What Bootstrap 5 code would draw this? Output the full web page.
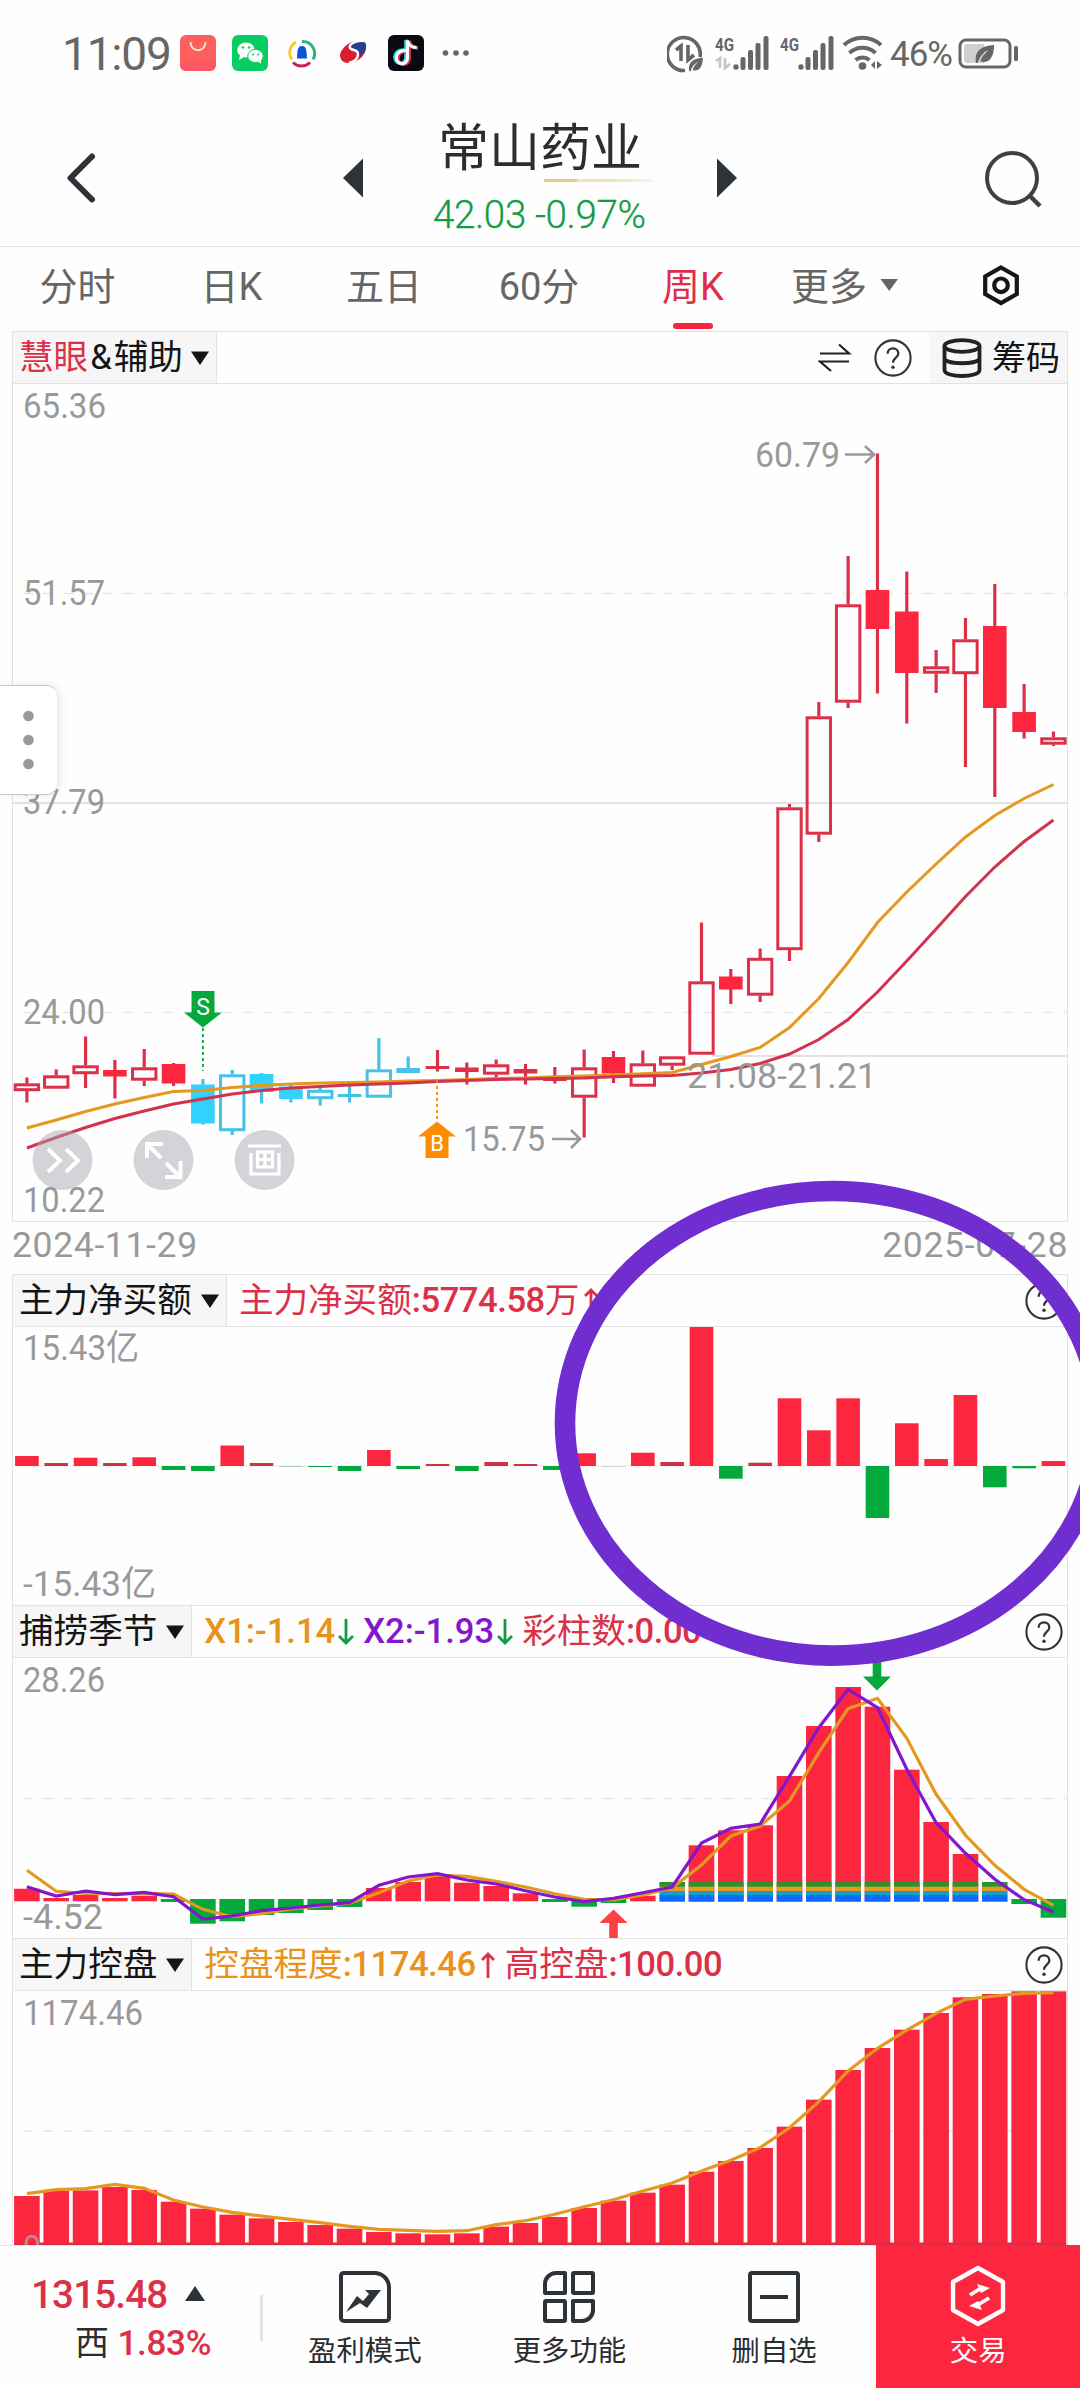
<!DOCTYPE html>
<html lang="zh-CN">
<head>
<meta charset="utf-8">
<meta name="viewport" content="width=device-width, initial-scale=1">
<title>常山药业 周K</title>
<link href="https://cdn.jsdelivr.net/npm/bootstrap@5.3.0/dist/css/bootstrap.min.css" rel="stylesheet">
<style>
:root{--up:#fd263f;--upline:#dc3049;--down:#04a93b;--sky:#31d2fd;--skyline:#45c3e6;--gold:#e5981f;--violet:#8416cc;--rule:#e2e2e2}
body{font-family:Roboto,"Noto Sans CJK SC",sans-serif;background:#fefefe;color:#2b2d30;width:1080px;height:2388px;overflow:hidden;position:relative;line-height:1}
svg{display:block;flex:none}
.statusbar{height:108px;padding:0 0 0 62px;color:#666}
.clock{font-size:46px;letter-spacing:-1.2px;width:118px}
.pct{font-size:35px;letter-spacing:-1px;width:68px;white-space:nowrap}
.titlebar{height:139px;border-bottom:1px solid var(--rule)}
.titlecol{width:216px;padding-top:11px}
.stock{font-size:51px;line-height:60px;width:204px;margin-left:8px;white-space:nowrap}
.quote{font-size:38.5px;line-height:40px;margin:13px 0 0 3px;font-weight:300;color:#109c42;-webkit-text-stroke:.3px #109c42;white-space:nowrap;letter-spacing:-.35px}
.goldline{width:109px;height:3px;margin-left:114px;background:linear-gradient(90deg,#e2cd94 0 30%,#f2e3b4 30% 60%,#f7f4ec)}
.tabs{height:84px;font-size:38px;color:#666}
.tabs .tab{white-space:nowrap;line-height:81px;height:84px;text-align:center;flex:none}
.tabs .on{color:var(--upline);position:relative}
.tabs .on::after{content:"";position:absolute;left:50%;margin-left:-20px;bottom:2px;width:40px;height:6px;border-radius:3px;background:#f5253f}
.panels{padding:0 12px}
.panel{border:1px solid var(--rule);border-bottom:0}
.phead{height:52px;border-bottom:1px solid var(--rule);font-size:34.6px;color:#141414}
.chip{background:#f6f6f6;height:51px;padding:0 7px 0 6px;border-right:1px solid var(--rule);white-space:nowrap}
.legend{white-space:nowrap;font-size:34.6px;line-height:51px}
.legend b{font-weight:500;letter-spacing:-.45px}
.legend b.x12{letter-spacing:0}
.amp{padding:0 2px}
.rd{color:var(--upline)}.gd{color:#e9921c}.vt{color:var(--violet)}
.dates{height:53px;font-size:35.5px;color:#999;line-height:46px;letter-spacing:.65px}
.axis text{font-size:35px;fill:#999}
.bottombar{height:144px;border-top:1px solid var(--rule);background:#fefefe;font-size:28.4px}
.idx{width:260px;height:143px;padding-top:27px}
.idx .big{font-size:38.5px;font-weight:500;letter-spacing:-.8px;color:var(--upline);padding-left:31px;line-height:44px}
.idx .sub{padding-left:75px;margin-top:5px;font-size:34px;line-height:42px}
.idx .sub b{font-weight:500;color:var(--upline);font-size:35px;letter-spacing:-.3px}
.vr2{width:3px;height:46px;background:#e3e3e3}
.act{width:205px;padding-top:25px}
.act span{line-height:32px;margin-top:13px}
.trade{background:var(--up);color:#fff;width:204px;height:144px;margin-top:-1px;padding-top:20px}
.handle{position:absolute;left:-2px;top:685px;width:60px;height:110px;background:#fff;border:1px solid #ccc;border-right-color:#eee;border-radius:0 12px 12px 0;box-shadow:2px 0 10px rgba(0,0,0,.09)}
.ring{position:absolute;left:0;top:1170px;pointer-events:none}
</style>
<script src="https://cdn.jsdelivr.net/npm/bootstrap@5.3.0/dist/js/bootstrap.bundle.min.js"></script>
</head>
<body>
<svg width="0" height="0" class="position-absolute">
  <defs>
    <symbol id="help" viewBox="0 0 38 38"><circle cx="19" cy="19" r="17.6" fill="none" stroke="#333" stroke-width="2.100"/><path d="M13.6 14.8c0-3.3 2.3-5.4 5.4-5.4s5.3 2 5.3 5c0 4.3-5.2 4.400-5.200 9.300" fill="none" stroke="#333" stroke-width="2.300"/><circle cx="19" cy="28.300" r="1.700" fill="#333"/></symbol>
    <symbol id="caret" viewBox="0 0 18 14"><path d="M0 .5h18L9 14z" fill="#141414"/></symbol>
    <symbol id="leaf" viewBox="0 0 22 22"><path d="M1 21C-1 8 6 2 21 1c0 15-7 21-15 18 2-6 5-9 9-12C9 9 5 14 3 21z"/></symbol>
    <symbol id="bars" viewBox="0 0 36 34"><g fill="#666"><circle cx="3" cy="31" r="2.700"/><rect x="7.500" y="21" width="5" height="13" rx="2"/><rect x="15" y="14" width="5" height="20" rx="2"/><rect x="22.500" y="7" width="5" height="27" rx="2"/><rect x="30.500" y="0" width="5" height="34" rx="2"/></g></symbol>
  </defs>
</svg>

<header>
  <div class="statusbar d-flex align-items-center">
    <div class="clock">11:09</div>
    <svg width="300" height="38" viewBox="180 36 300 38">
      <rect x="180" y="36" width="36" height="36" rx="6" fill="#fd5f5f"/><path d="M180 62h36v4a6 6 0 0 1-6 6h-24a6 6 0 0 1-6-6z" fill="#f85567" opacity=".6"/><path d="M190.500 43c0 11 15 11 15 0" fill="none" stroke="#ffe7c9" stroke-width="1.800"/>
      <rect x="232" y="36" width="36" height="36" rx="6" fill="#07cd63"/><ellipse cx="246" cy="51" rx="8.800" ry="7.500" fill="#fff"/><path d="M240 56l-1 5 5-3z" fill="#fff"/><ellipse cx="255.500" cy="57" rx="7.800" ry="6.600" fill="#fff" stroke="#07cd63" stroke-width="1"/><path d="M258 62l3 3v-5z" fill="#fff"/><g fill="#07cd63"><circle cx="243" cy="48.500" r="1.200"/><circle cx="249" cy="48.500" r="1.200"/><circle cx="253" cy="55.500" r="1"/><circle cx="258" cy="55.500" r="1"/></g>
      <g fill="none" stroke-width="3"><path d="M292 60.500a12 12 0 0 1 4-17.500" stroke="#f0cd2c"/><path d="M302 42.500a12 12 0 0 1 11 18" stroke="#2fb08c"/><path d="M293 63.500a12 12 0 0 0 17 0" stroke="#c81e62"/></g><path d="M302 47c5 0 4.500 6 5 12.500h-10c.5-6.500 0-12.500 5-12.500z" fill="#0b55d8"/>
      <ellipse cx="353" cy="53" rx="14" ry="9.500" transform="rotate(-32 353 53)" fill="#d5202e"/><path d="M354 43c6-2 11-1 12 2 1 6-3 12-11 15 6-7 3-9-3-10-5-2-2-6 2-7z" fill="#24408e"/><path d="M364 42c-9-1-16 4-14 7s8 1 8 6-5 8-9 9" fill="none" stroke="#fff" stroke-width="2.500"/>
      <rect x="388" y="36" width="36" height="36" rx="6" fill="#0a0a12"/><g fill="none" stroke-width="3.600"><path d="M405 51c-14-1-12 15-3 13 3-1 4-3 4-6V41c1 4 4 7 9 7" stroke="#27dfd9"/><path d="M408 52c-14-1-12 15-3 13 3-1 4-3 4-6V42c1 4 4 7 9 7" stroke="#f43361"/><path d="M406.500 51.500c-14-1-12 15-3 13 3-1 4-3 4-6V41.500c1 4 4 7 9 7" stroke="#fff" stroke-width="3"/></g>
      <g fill="#666"><circle cx="445.500" cy="54" r="2.800"/><circle cx="456" cy="54" r="2.800"/><circle cx="466" cy="54" r="2.800"/></g>
    </svg>
    <svg width="215" height="40" viewBox="667 35 215 40" style="margin-left:187px">
      <path d="M685 71.500A16.500 16.500 0 1 1 700 58" fill="none" stroke="#666" stroke-width="3.600"/><path d="M676 51l5-4v15M688 46v15l6-5" fill="none" stroke="#666" stroke-width="3.600"/><use href="#leaf" x="688" y="58" width="16" height="15" fill="#666"/>
      <text x="715" y="52" font-size="19" font-weight="700" fill="#666" textLength="19" lengthAdjust="spacingAndGlyphs">4G</text><use href="#bars" x="733" y="37" width="36" height="34"/>
      <path d="M716 62l4-3v10M725 59v10l5-4" fill="none" stroke="#c4c4c4" stroke-width="2.600"/>
      <text x="780" y="52" font-size="19" font-weight="700" fill="#666" textLength="19" lengthAdjust="spacingAndGlyphs">4G</text><use href="#bars" x="798" y="37" width="36" height="34"/>
      <g fill="none" stroke="#666" stroke-width="4"><path d="M844 46a27 27 0 0 1 37 0"/><path d="M849.500 54a19 19 0 0 1 26 0"/><path d="M855.500 61a11 11 0 0 1 14 0"/></g><circle cx="862.500" cy="67" r="3.800" fill="#666"/><path d="M871 66l4-4v8zM877 62v8l5-4z" fill="#666"/>
    </svg>
    <div class="pct ms-2">46%</div>
    <svg width="62" height="32" viewBox="0 0 62 32"><rect x="2" y="2" width="50" height="27" rx="6" fill="none" stroke="#666" stroke-width="3"/><path d="M9 6h17v19H9a3 3 0 0 1-3-3V9a3 3 0 0 1 3-3z" fill="#cfcfcf"/><use href="#leaf" x="16" y="6" width="22" height="20" fill="#666"/><rect x="56" y="8" width="4" height="15" rx="1.500" fill="#666"/></svg>
  </div>
  <div class="titlebar d-flex">
    <svg width="430" height="138" viewBox="0 108 430 138"><path d="M92 156.500L70.500 178L92 199.500" fill="none" stroke="#2d3338" stroke-width="6" stroke-linecap="round" stroke-linejoin="round"/><path d="M363 158.500v39L343 178z" fill="#2d3338"/></svg>
    <div class="titlecol">
      <div class="stock">常山药业</div>
      <div class="goldline"></div>
      <div class="quote">42.03 -0.97%</div>
    </div>
    <svg width="434" height="138" viewBox="646 108 434 138"><path d="M717 158.500v39L737 178z" fill="#2d3338"/><circle cx="1012" cy="178" r="25" fill="none" stroke="#3d4144" stroke-width="4"/><path d="M1029 195l11 11" stroke="#3d4144" stroke-width="4.500"/></svg>
  </div>
  <nav class="tabs d-flex">
    <div class="tab" style="width:155px">分时</div>
    <div class="tab" style="width:153px">日K</div>
    <div class="tab" style="width:152px">五日</div>
    <div class="tab" style="width:158px">60分</div>
    <div class="tab on" style="width:150px">周K</div>
    <div class="tab" style="width:122px">更多</div>
    <svg width="200" height="84" viewBox="880 247 200 84" style="margin-left:-10px"><path d="M880.500 279h17.500l-8.750 12z" fill="#666"/><path d="M1001 267.500l15.800 9v17.500l-15.800 9-15.800-9V276.500z" fill="none" stroke="#161616" stroke-width="4.200"/><circle cx="1001" cy="285.300" r="6.800" fill="none" stroke="#161616" stroke-width="4.200"/></svg>
  </nav>
</header>

<main class="panels">
  <section class="panel">
    <div class="phead d-flex align-items-center">
      <div class="chip d-flex align-items-center"><span><span class="rd">慧眼</span><span class="amp">&amp;</span>辅助</span><svg class="ms-2" width="18" height="14"><use href="#caret"/></svg></div>
      <svg class="ms-auto" width="34" height="30" viewBox="0 0 34 30"><path d="M2 10.500h29L21 1.500M31 18.500H2l11 9.500" fill="none" stroke="#222" stroke-width="2.200"/></svg>
      <svg width="38" height="38" style="margin-left:22px"><use href="#help"/></svg>
      <div class="chip d-flex align-items-center border-0" style="margin-left:17px;padding:0 7px 0 13px">
        <svg width="40" height="40" viewBox="0 0 40 40"><g fill="none" stroke="#222" stroke-width="3.800"><ellipse cx="20" cy="8" rx="17.500" ry="5.800"/><path d="M2.500 8v24c0 8 35 8 35 0V8M2.500 20c0 7 35 7 35 0"/></g></svg>
        <span style="margin-left:10px;font-size:34px">筹码</span>
      </div>
    </div>
    <svg class="axis" id="kline" width="1054" height="837" viewBox="13 383 1054 837"></svg>
  </section>
  <div class="dates d-flex justify-content-between border-top"><span>2024-11-29</span><span>2025-07-28</span></div>
  <section class="panel">
    <div class="phead d-flex align-items-center">
      <div class="chip d-flex align-items-center"><span>主力净买额</span><svg style="margin-left:9px" width="18" height="14"><use href="#caret"/></svg></div>
      <div class="legend rd d-flex align-items-center" style="margin-left:12px"><span>主力净买额<b>:5774.58</b>万</span><svg style="margin-left:4px" width="16" height="26" viewBox="0 0 16 26"><path d="M8 26V2M2 8l6-6 6 6" fill="none" stroke="#dc3049" stroke-width="2.800"/></svg></div>
      <svg class="ms-auto me-1" width="38" height="38"><use href="#help"/></svg>
    </div>
    <svg class="axis" id="netbuy" width="1054" height="278" viewBox="13 1326 1054 278"></svg>
  </section>
  <section class="panel">
    <div class="phead d-flex align-items-center">
      <div class="chip d-flex align-items-center"><span>捕捞季节</span><svg style="margin-left:9px" width="18" height="14"><use href="#caret"/></svg></div>
      <div class="legend d-flex align-items-center" style="margin-left:12px"><b class="gd x12">X1:-1.14</b><svg style="margin-left:3px" width="16" height="26" viewBox="0 0 16 26"><path d="M8 0v24M1 17l7 7 7-7" fill="none" stroke="#109c42" stroke-width="2.800"/></svg><b class="vt x12" style="margin-left:9px">X2:-1.93</b><svg style="margin-left:3px" width="16" height="26" viewBox="0 0 16 26"><path d="M8 0v24M1 17l7 7 7-7" fill="none" stroke="#109c42" stroke-width="2.800"/></svg><span class="rd" style="margin-left:9px">彩柱数<b>:0.00</b></span></div>
      <svg class="ms-auto me-1" width="38" height="38"><use href="#help"/></svg>
    </div>
    <svg class="axis" id="season" width="1054" height="280" viewBox="13 1657 1054 280"></svg>
  </section>
  <section class="panel">
    <div class="phead d-flex align-items-center">
      <div class="chip d-flex align-items-center"><span>主力控盘</span><svg style="margin-left:9px" width="18" height="14"><use href="#caret"/></svg></div>
      <div class="legend d-flex align-items-center" style="margin-left:12px"><span class="gd">控盘程度<b>:1174.46</b></span><svg class="ms-1" width="16" height="26" viewBox="0 0 16 26"><path d="M8 26V2M2 8l6-6 6 6" fill="none" stroke="#dc3049" stroke-width="2.800"/></svg><span class="rd" style="margin-left:9px">高控盘<b>:100.00</b></span></div>
      <svg class="ms-auto me-1" width="38" height="38"><use href="#help"/></svg>
    </div>
    <svg class="axis" id="control" width="1054" height="254" viewBox="13 1990 1054 254"></svg>
  </section>
</main>

<footer class="bottombar d-flex align-items-start">
  <div class="idx d-flex flex-column">
    <div class="big d-flex align-items-center">1315.48<svg style="margin-left:18px;margin-bottom:4px" width="20" height="15"><path d="M0 15L10 0l10 15z" fill="#2d3338"/></svg></div>
    <div class="sub">西 <b>1.83%</b></div>
  </div>
  <div class="vr2 align-self-center"></div>
  <div class="act d-flex flex-column align-items-center"><svg width="52" height="52" viewBox="0 0 52 52"><path d="M4.500 2h31A14.500 14.500 0 0 1 50 16.500V47a3 3 0 0 1-3 3H5a3 3 0 0 1-3-3V5a3 3 0 0 1 2.500-3z" fill="none" stroke="#2d3338" stroke-width="4"/><path d="M7 41l11-16 6 5 6-7-4-4h16L28 37l-7-5z" fill="#2d3338"/></svg><span>盈利模式</span></div>
  <div class="act d-flex flex-column align-items-center"><svg width="52" height="52" viewBox="0 0 52 52"><g fill="none" stroke="#2d3338" stroke-width="4" stroke-linejoin="round"><path d="M22 2v20H2V13A11 11 0 0 1 13 2z"/><rect x="30" y="2" width="20" height="20" rx="1"/><rect x="2" y="30" width="20" height="20" rx="1"/><path d="M30 30h20v9a11 11 0 0 1-11 11h-9z"/></g></svg><span>更多功能</span></div>
  <div class="act d-flex flex-column align-items-center"><svg width="52" height="52" viewBox="0 0 52 52"><rect x="2" y="2" width="48" height="48" rx="2" fill="none" stroke="#2d3338" stroke-width="4"/><path d="M12 26h28" stroke="#2d3338" stroke-width="4"/></svg><span>删自选</span></div>
  <div class="trade act d-flex flex-column align-items-center"><svg width="56" height="62" viewBox="0 0 56 62"><path d="M28 3l25 14v28L28 59 3 45V17z" fill="none" stroke="#fff" stroke-width="4.400" stroke-linejoin="round"/><path d="M20 30l13-8" stroke="#fff" stroke-width="3.800"/><path d="M27 19l13 4-9 5z" fill="#fff"/><path d="M39 33l-13 8" stroke="#fff" stroke-width="3.800"/><path d="M32 45l-13-4 9-5z" fill="#fff"/></svg><span style="margin-top:9px">交易</span></div>
</footer>

<div class="handle"><svg width="58" height="108" viewBox="-1 686 58 108"><g fill="#999"><circle cx="28.500" cy="716" r="5.300"/><circle cx="28.500" cy="740" r="5.300"/><circle cx="28.500" cy="764" r="5.300"/></g></svg></div>
<svg class="ring" width="1080" height="510" viewBox="0 1170 1080 510"><ellipse cx="832.500" cy="1423.300" rx="267.500" ry="232.300" fill="none" stroke="#702ed0" stroke-width="20.600"/></svg>

<script>
const cx = i => 26.9 + 29.33 * i;
const R = (x, y, w, h, f) => `<rect x="${x}" y="${y}" width="${w}" height="${h}" fill="${f}"/>`;
const line = (pts, c, w = 3.2) => `<polyline points="${pts.map((y, i) => cx(i).toFixed(1) + ',' + y).join(' ')}" fill="none" stroke="${c}" stroke-width="${w}"/>`;
const T = (x, y, s, w, c = '#999') => `<text x="${x}" y="${y}" textLength="${w}" lengthAdjust="spacingAndGlyphs" style="fill:${c}">${s}</text>`;
const dash = y => `<path d="M23 ${y}H1067" stroke="#e6e6e6" stroke-width="1.6" stroke-dasharray="10 10"/>`;
const UP = '#fd263f', UPL = '#dc3049', DN = '#04a93b', GOLD = '#e5981f', VIO = '#8416cc';

/* weekly candles: type (h hollow, f filled; lower case red, upper case sky), body top, body bottom, high, low */
const K = [
 ['h',1082.5,1090,1076.5,1101.5],['h',1074.5,1087.5,1068.5,1087],['h',1064.5,1073,1035.5,1087],['f',1069,1075.5,1059,1097.5],
 ['h',1066.5,1079.5,1048,1085],['f',1063,1082.5,1062,1085],['F',1083.5,1122.5,1078,1123.5],['H',1073.5,1130,1069,1134],
 ['F',1073,1091,1072,1102.5],['F',1085.5,1098,1084,1101.5],['H',1089,1098,1086,1104.5],['F',1093,1096,1080.5,1101.5],
 ['H',1068.5,1096.5,1037,1096],['F',1067,1072,1055.5,1072],['f',1065,1068,1049,1070.5],['f',1066.5,1071,1061.5,1083.5],
 ['h',1063.5,1073.5,1058.5,1077],['f',1068,1072.5,1063,1083.5],['f',1077,1080,1066,1082.5],['h',1066.5,1096.5,1048.5,1136.5],
 ['f',1056,1072.5,1050,1082],['h',1062.5,1085.5,1049.5,1085],['h',1055.5,1064.5,1056,1069],['h',980.5,1053.5,921.5,1053],
 ['f',975.5,988.5,968,1003],['h',957,994.5,947.5,1001],['h',806.5,949,803,960],['h',715.5,833.5,701,841],
 ['h',603.5,701.5,555,707],['f',589,628,452.5,692.5],['f',610.5,672,570.5,722.5],['h',665.5,672.5,649,692],
 ['h',638.5,673,617,766],['f',625,707,583,796],['f',711,731,683,737.5],['h',736.5,743.5,730.5,745]];
let s = dash(592.5) + dash(1011.5) + '<path d="M13 802H1067M712 1055H1067" stroke="#e2e2e2" stroke-width="2"/>';
K.forEach(([t, a, b, hi, lo], i) => {
  const sky = t < 'a', fill = sky ? '#31d2fd' : UP, st = sky ? '#45c3e6' : UPL, x = cx(i);
  if (t.toLowerCase() === 'f') s += R(x - 1.6, hi, 3.2, lo - hi, st) + R(x - 11.8, a, 23.6, b - a, b - a < 6 ? st : fill);
  else s += R(x - 1.6, hi, 3.2, Math.max(0, a - hi), st) + R(x - 1.6, b, 3.2, Math.max(0, lo - b), st)
    + `<rect x="${x - 11.7}" y="${a + 1.3}" width="23.4" height="${b - a - 2.6}" fill="none" stroke="${st}" stroke-width="3"/>`;
});
s += line([1127,1119,1110.5,1103,1096.5,1090.5,1089.5,1086.5,1084.5,1083,1082,1081.5,1081,1080,1079.5,1078.5,1077.5,1077,1075.8,1075,1074,1072.8,1071.5,1063.5,1055.5,1046.5,1026.5,997.5,961.5,921.5,891,863,836,814.5,797.5,783.5], GOLD, 3);
s += line([1147,1136.5,1126.5,1117.5,1110,1103,1098,1093,1089.5,1087,1085.5,1084,1083,1082,1080.5,1079.5,1078.5,1078,1077.5,1077,1075.7,1075,1074.5,1072,1068.5,1062.5,1053,1038.5,1018.5,991,960,928,895.5,866,840.5,819], '#d2324d', 3);
s += '<path d="M202.900 1027V1070" stroke="#109c42" stroke-width="1.800" stroke-dasharray="3 3"/><path d="M191.500 990h23v21.500h7.500L202.900 1026.500 184 1011.500h7.500z" fill="#04a93b"/>'
  + '<path d="M437 1079V1121" stroke="#f08a0c" stroke-width="1.800" stroke-dasharray="3 3"/><path d="M437 1120.500l19 15h-7.500V1157h-23v-21.500H418z" fill="#fd8c05"/>'
  + '<text x="203" y="1014" text-anchor="middle" style="font-size:23px;fill:#fff">S</text><text x="437" y="1150" text-anchor="middle" style="font-size:22px;fill:#fff">B</text>';
s += T(23,417,'65.36',83) + T(23,604,'51.57',82) + T(23,813,'37.79',82) + T(23,1022.5,'24.00',82);
s += '<g fill="#aaa5ad" fill-opacity=".48"><circle cx="62.500" cy="1159" r="30"/><circle cx="163.500" cy="1159" r="30"/><circle cx="264.500" cy="1159" r="30"/></g>'
  + '<g fill="none" stroke="#fff" stroke-width="4"><path d="M48 1148l12 11.500L48 1171M66 1148l12 11.500L66 1171"/><path d="M147 1157v-14h16M148 1144l13 13M165 1176h15.500v-16M179 1175l-13-13"/></g>'
  + '<g fill="none" stroke="#fff" stroke-width="3.200"><path d="M248 1145h33M251 1152v21h28v-21"/><rect x="257.500" y="1151" width="15" height="15"/><path d="M265 1150v16M257 1158.500h16"/></g>';
s += T(23,1210.5,'10.22',82) + T(463,1149.5,'15.75',82) + T(755,465.5,'60.79',85) + T(687,1086.5,'21.08-21.21',190);
s += '<path d="M845 453.500h29M865 445l9 8.500-9 8.500M552 1138h28M571 1129l9 9-9 9" fill="none" stroke="#999" stroke-width="2.600"/>';
document.getElementById('kline').innerHTML = s;

/* main-force net buying, pixels above/below zero */
const N = [10,3,8.3,3,8.7,-4,-5,20.5,3,-.8,-1,-5,16,-3,2,-5,4,2,-4,12.7,-.5,13.3,4,139,-12.7,3.3,67.7,35.7,67.7,-52,42.7,7,71,-21.3,-2.3,5];
s = '<path d="M13 1465H1067" stroke="#f2e6e6" stroke-width="1"/>';
N.forEach((v, i) => s += R(cx(i) - 11.8, v > 0 ? 1465 - v : 1465, 23.6, Math.abs(v), v > 0 ? (v < 4.5 ? '#cf3248' : UP) : (Math.abs(v) < 1 ? '#9fc7aa' : DN)));
s += T(23,1358.5,'15.43亿',116) + T(23,1594.5,'-15.43亿',133);
document.getElementById('netbuy').innerHTML = s;

/* seasonal indicator bars: positive tops / negative bottoms */
const P = [1887.7,1897,1894,1897,1894.7,-1901,-1922.7,-1920.3,-1914,-1912,-1909,-1906,1887,1881,1874,1881.7,1885,1892.3,-1901,-1905.7,-1902,1894.7,0,1844.3,1829.3,1824.3,1775,1725,1686,1705.7,1768.7,1821,1853,0,-1903,-1916.7];
s = dash(1797.5);
P.forEach((v, i) => {
  const x = cx(i) - 12.8;
  if (v > 0) s += R(x, v, 25.6, 1900.3 - v, UP);
  if (v < 0) s += R(x, 1898, 25.6, -v - 1898, DN);
  if (i > 21 && i < 34) s += R(x,1881,25.6,5,'#2f9030') + R(x,1885.7,25.6,4.5,'#e69b1e') + R(x,1890,25.6,4.2,'#12a0c8') + R(x,1894,25.6,6.7,'#0a6cff');
});
s += T(23,1690.5,'28.26',82) + T(23,1927.5,'-4.52',80);
const z = (a, b) => a.map(v => 1600 + v / 3).concat(b.map(v => 1640 + v / 3)).map(v => v.toFixed(1));
s += line(z([808,871,877,878,877,879,925,947,938,924,915,907,875,840,822,826,841,858],[758,775,777,762,740,672,585,555,480,335,203,172,292,460,583,673,745,793]), GOLD);
s += line(z([857,885,870,881,874,887,954,945,929,921,912,905,853,828,818,837,849,869],[768,782,772,755,738,606,562,549,406,260,145,200,385,545,637,715,776,813]), VIO);
s += '<path d="M872.700 1658h8.600v17.500h9.700l-14 14-14-14h9.700z" fill="#04a93b"/><path d="M613.500 1908.500l14 13.500h-9.700v15h-8.600v-15h-9.700z" fill="#fd4048"/>';
document.getElementById('season').innerHTML = s;

/* control strength */
const C = [705,690,688,678,687,722,743,761,772,783,792,803,813,817,820,817,797,786,768,741,719,695,671,632,600,561,497,416,327,261,206,156,109,99,91,91];
const CL = [698,686,683,670,682,717,738,754,765,775,785,796,805,808,811,809,791,779,760,737,716,690,666,630,598,560,500,422,330,262,207,157,115,105,97,95];
s = dash(2130);
C.forEach((v, i) => s += R(cx(i) - 12.8, 1960 + v / 3, 25.6, 284 - v / 3, UP));
s += R(14, 2241.5, 1052, 2.5, '#dd2c44') + line(CL.map(v => (1960 + v / 3).toFixed(1)), GOLD);
s += T(23,2023.5,'1174.46',120) + T(23,2259,'0',18,'#b98a90');
document.getElementById('control').innerHTML = s;
</script>
</body>
</html>
